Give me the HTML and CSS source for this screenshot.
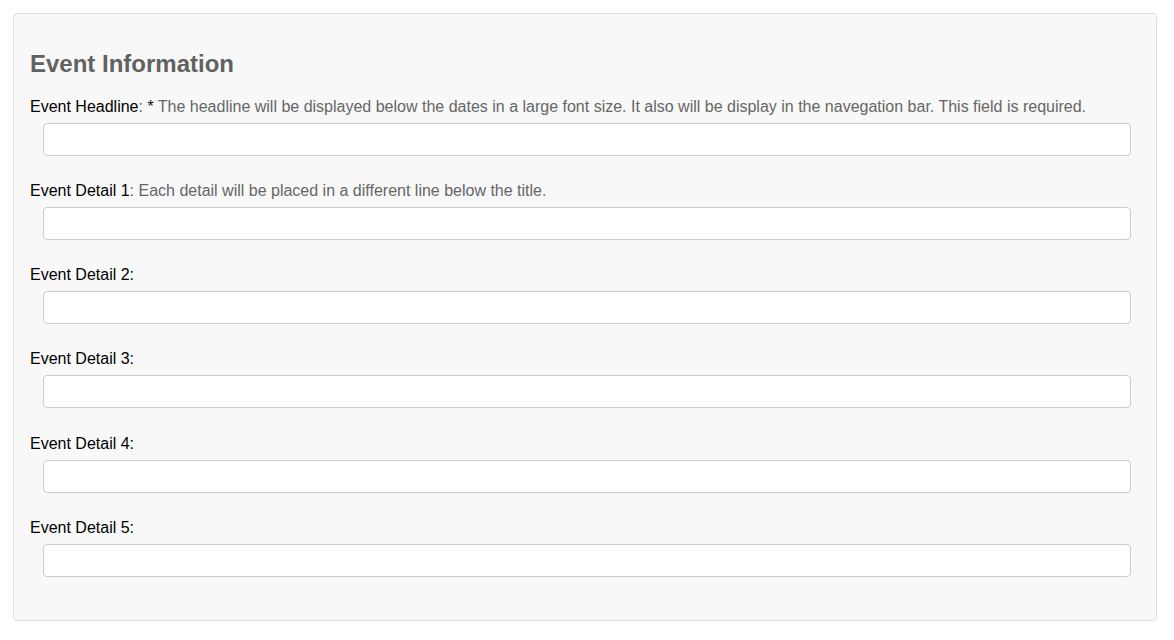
FILE: index.html
```html
<!DOCTYPE html>
<html>
<head>
<meta charset="utf-8">
<link rel="stylesheet" href="styles.css">
</head>
<body>
<div class="panel">
  <h3 class="title">Event Information</h3>
  <div class="group">
    <label class="lbl">Event Headline<span class="help">: </span><span class="req">*</span><span class="help"> The headline will be displayed below the dates in a large font size. It also will be display in the navegation bar. This field is required.</span></label>
    <input class="field" type="text">
  </div>
  <div class="group">
    <label class="lbl">Event Detail 1<span class="help">: Each detail will be placed in a different line below the title.</span></label>
    <input class="field" type="text">
  </div>
  <div class="group">
    <label class="lbl">Event Detail 2:</label>
    <input class="field" type="text">
  </div>
  <div class="group">
    <label class="lbl">Event Detail 3:</label>
    <input class="field" type="text">
  </div>
  <div class="group">
    <label class="lbl">Event Detail 4:</label>
    <input class="field" type="text">
  </div>
  <div class="group">
    <label class="lbl">Event Detail 5:</label>
    <input class="field" type="text">
  </div>
</div>
</body>
</html>
```

FILE: styles.css
```css
html, body {
  margin: 0;
  padding: 0;
  background: #ffffff;
}
body {
  padding: 13px 17px 0 13px;
  font-family: "Liberation Sans", Arial, sans-serif;
  font-size: 14px;
  line-height: 20px;
  color: #000;
}
.panel {
  background: #f8f8f8;
  border: 1px solid #dddddd;
  border-radius: 4px;
  padding: 16px 16px 19px 16px;
  display: flex;
  flex-direction: column;
}
.title {
  margin: 20.5px 0 19px 0;
  font-size: 24px;
  line-height: 26.4px;
  font-weight: bold;
  color: #616161;
}
.group {
  display: flex;
  flex-direction: column;
  margin-bottom: 24.2px;
}
.lbl {
  display: block;
  margin-bottom: 7px;
  font-size: 16px;
  line-height: 20px;
  position: relative;
  top: 1px;
  color: #000;
}
.help {
  color: #666666;
}
.req {
  color: #2a0000;
}
.field {
  box-sizing: border-box;
  height: 33px;
  margin: 0 9px 0 13px;
  padding: 6px 12px;
  background: #ffffff;
  border: 1px solid #cccccc;
  border-radius: 4px;
  font-family: inherit;
  font-size: 14px;
  outline: none;
}
```
